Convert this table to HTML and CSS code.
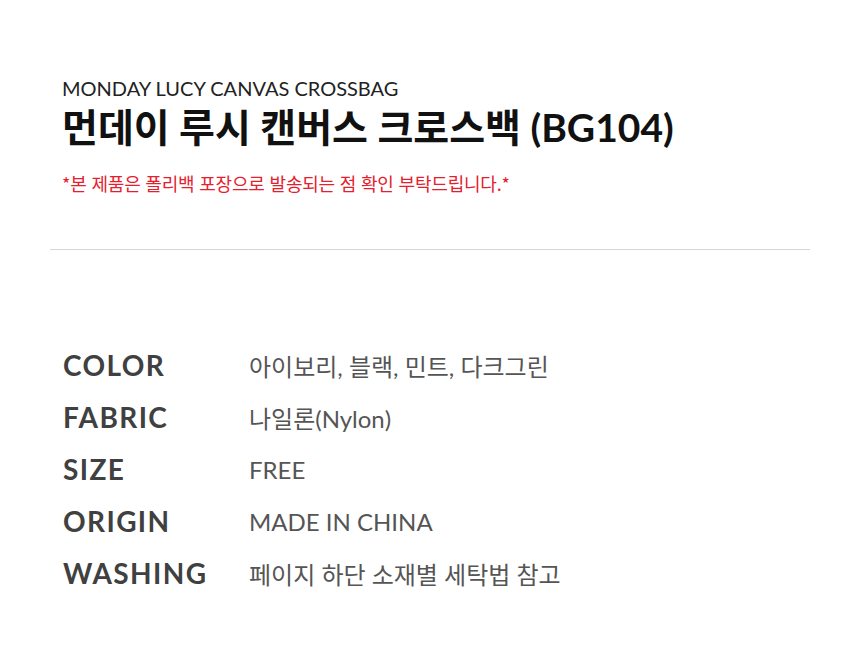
FILE: index.html
```html
<!DOCTYPE html>
<html lang="ko">
<head>
<meta charset="utf-8">
<link rel="stylesheet" href="styles.css">
</head>
<body>
<div class="page">
  <header class="head">
    <p class="en-name">MONDAY LUCY CANVAS CROSSBAG</p>
    <h1 class="ko-name">먼데이 루시 캔버스 크로스백 (BG104)</h1>
    <p class="notice">*본 제품은 폴리백 포장으로 발송되는 점 확인 부탁드립니다.*</p>
  </header>
  <hr class="divider">
  <dl class="specs">
    <div class="row"><dt>COLOR</dt><dd>아이보리, 블랙, 민트, 다크그린</dd></div>
    <div class="row"><dt>FABRIC</dt><dd>나일론(Nylon)</dd></div>
    <div class="row"><dt>SIZE</dt><dd>FREE</dd></div>
    <div class="row"><dt>ORIGIN</dt><dd>MADE IN CHINA</dd></div>
    <div class="row"><dt>WASHING</dt><dd>페이지 하단 소재별 세탁법 참고</dd></div>
  </dl>
</div>
</body>
</html>
```

FILE: styles.css
```css
* { box-sizing: border-box; }
html, body { margin: 0; padding: 0; background: #fff; }
body {
  font-family: "Lato", "Noto Sans CJK KR", sans-serif;
  color: #333;
}
.page {
  width: 860px;
  height: 667px;
  padding: 76px 50px 0 50px;
}
.head { padding-left: 12px; }
.en-name {
  margin: 0;
  font-size: 20px;
  line-height: 24px;
  font-weight: 400;
  color: #222;
}
.ko-name {
  margin: 4px 0 0 0;
  font-size: 39px;
  line-height: 46px;
  font-weight: 700;
  color: #111;
}
.notice {
  margin: 21px 0 0 0;
  font-family: "Noto Sans CJK KR", sans-serif;
  font-size: 18px;
  line-height: 24px;
  color: #e5202e;
  letter-spacing: -0.2px;
}
.divider {
  margin: 54px 0 0 0;
  border: 0;
  border-top: 1px solid #d6d6d6;
  height: 0;
}
.specs {
  margin: 89px 0 0 0;
  padding-left: 13px;
}
.row {
  display: flex;
  align-items: center;
  height: 52px;
}
.row dt {
  width: 186px;
  font-size: 28px;
  font-weight: 700;
  color: #404040;
  letter-spacing: 1.4px;
}
.row dd {
  margin: 0;
  font-size: 24px;
  color: #555;
}
```
